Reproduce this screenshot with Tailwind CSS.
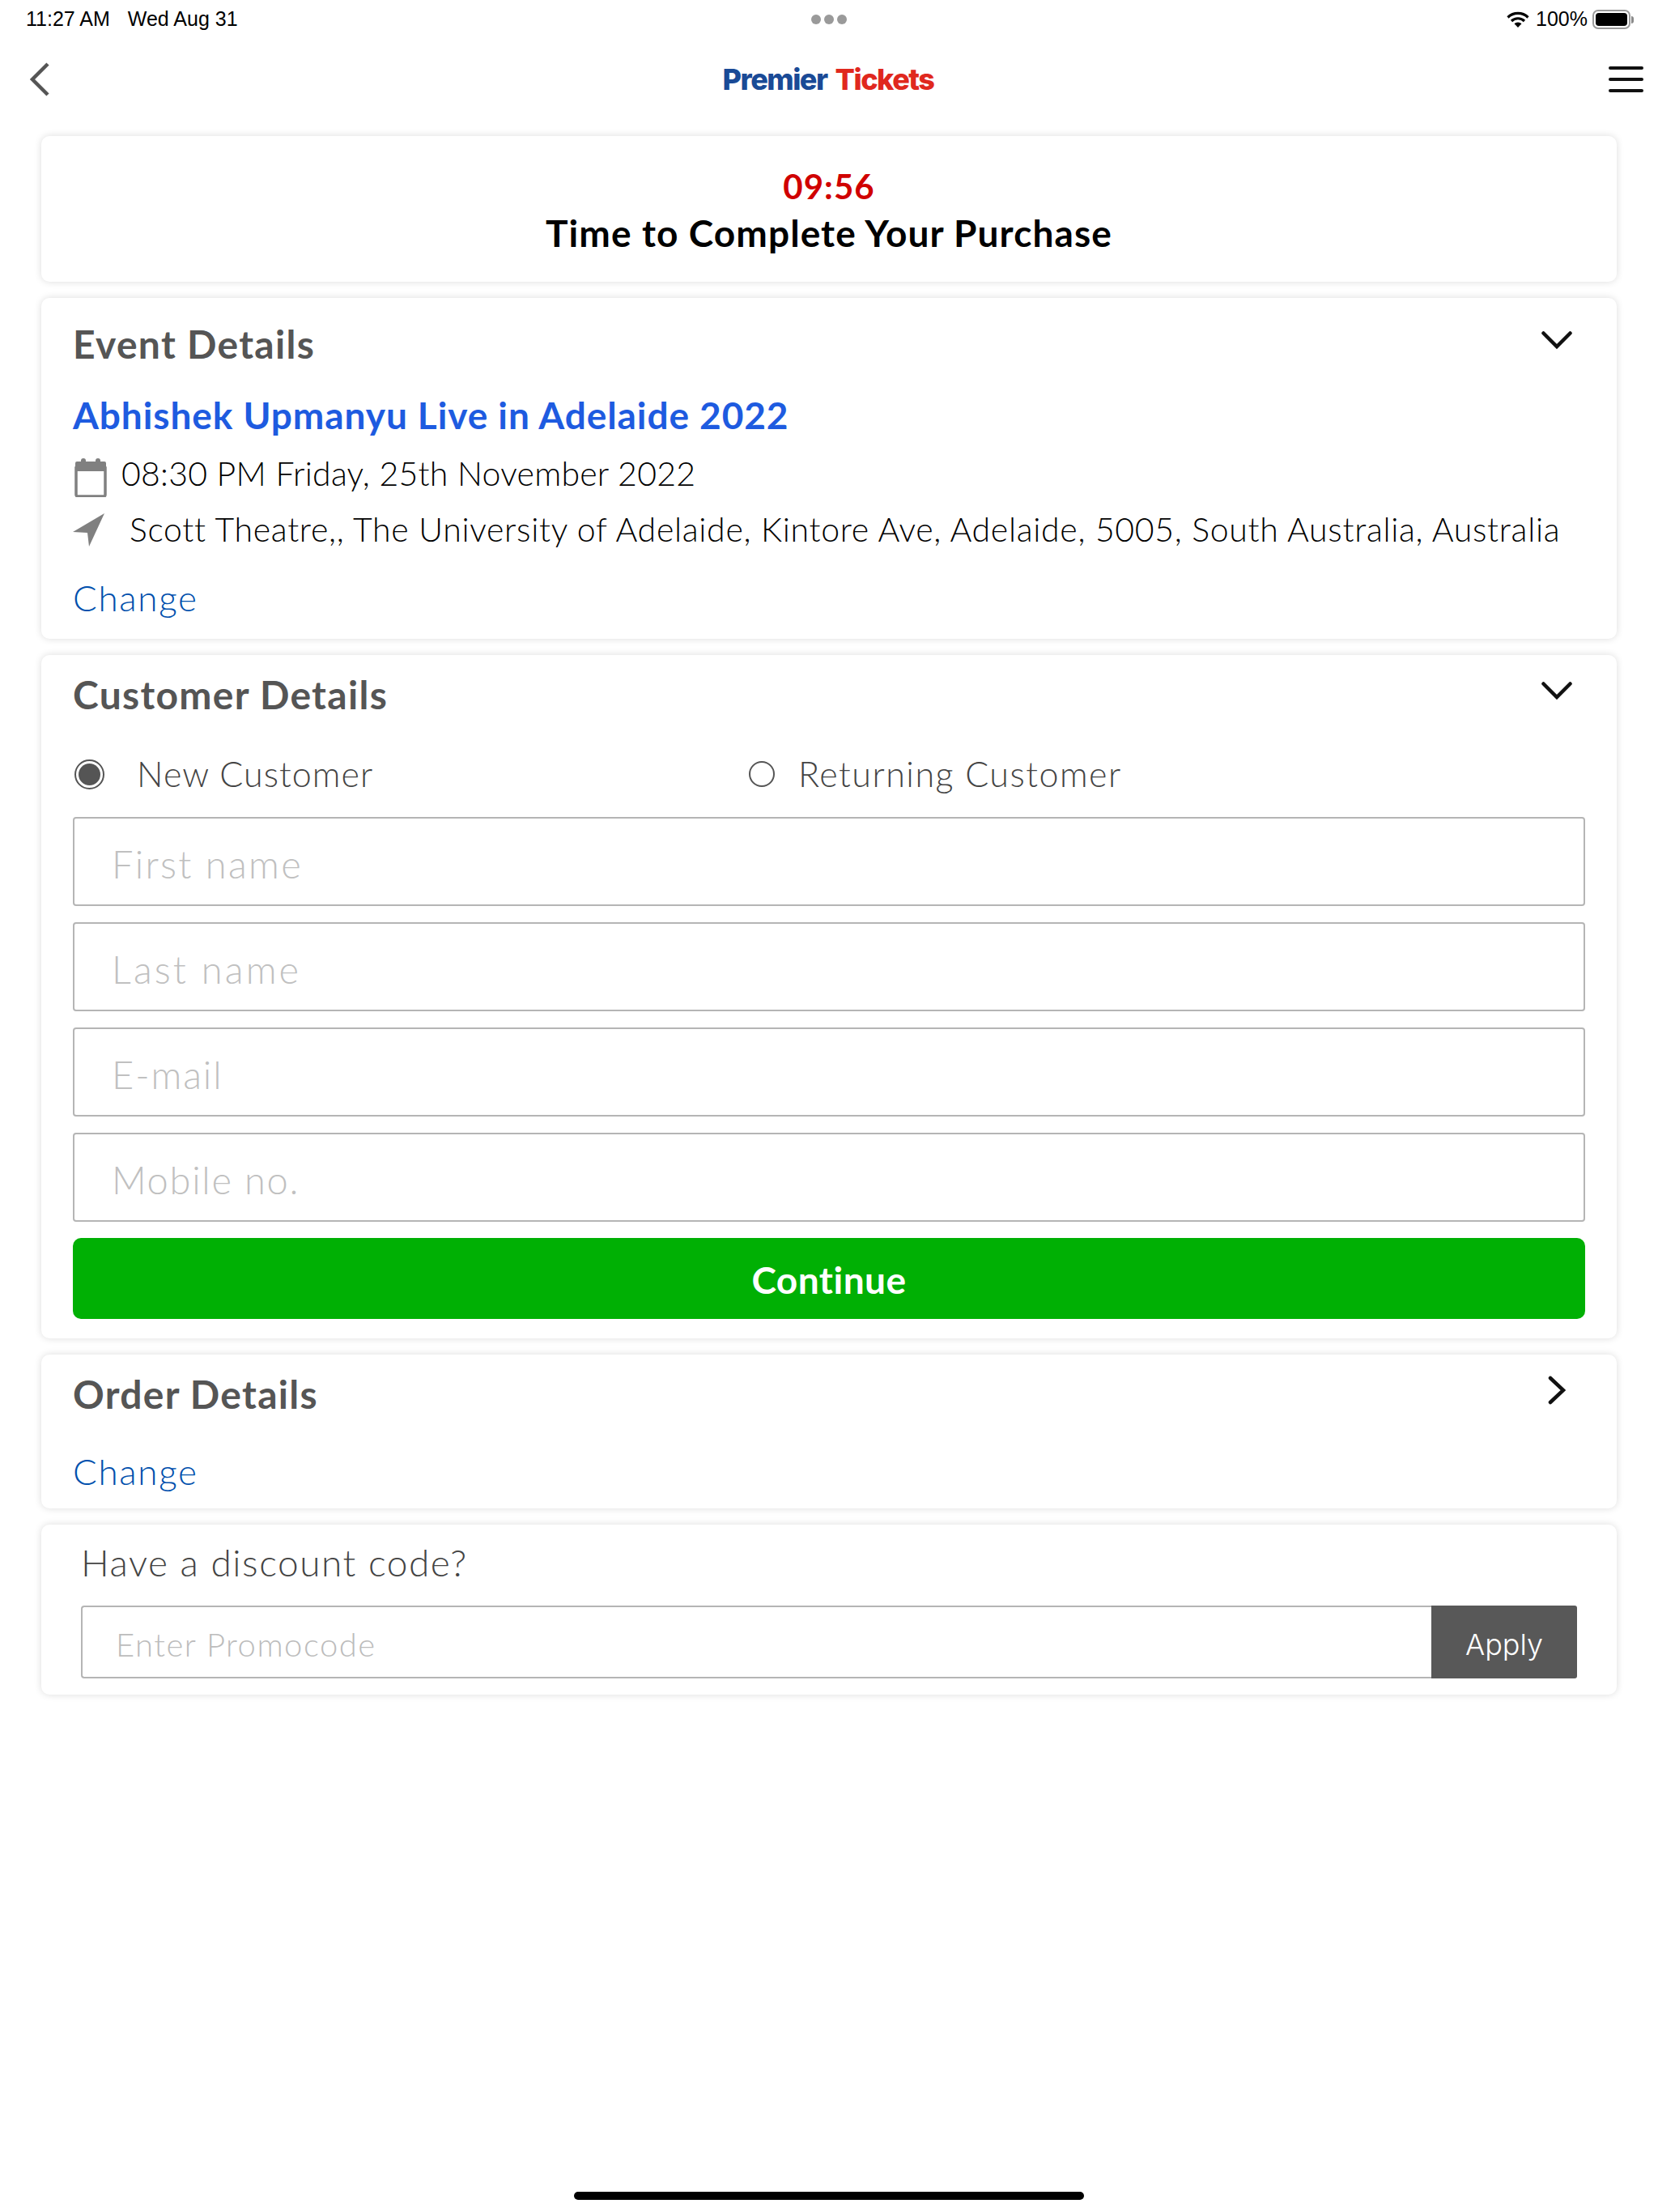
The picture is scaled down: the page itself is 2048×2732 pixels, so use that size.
<!DOCTYPE html>
<html><head><meta charset="utf-8"><script src="https://cdn.jsdelivr.net/npm/@tailwindcss/browser@4"></script></head>
<body class="bg-white font-['Lato',sans-serif] text-black">
<div class="relative w-[2048px] h-[2732px] overflow-hidden">
  <!-- status bar -->
  <div class="grid grid-cols-3 items-center h-[48px] pl-[32px] pr-[30px] font-['Liberation_Sans',sans-serif] text-[25px]">
    <div class="whitespace-nowrap"><span>11:27 AM</span><span class="ml-[22px]">Wed Aug 31</span></div>
    <div class="flex justify-center gap-[4px] pr-[2px]">
      <span class="w-[12px] h-[12px] rounded-full bg-[#9a9a9a]"></span><span class="w-[12px] h-[12px] rounded-full bg-[#9a9a9a]"></span><span class="w-[12px] h-[12px] rounded-full bg-[#9a9a9a]"></span>
    </div>
    <div class="flex items-center justify-end">
      <svg class="w-[28px] h-[20px] mr-[8px]" viewBox="0 0 28 20"><path d="M1.500 7.500 A18 18 0 0 1 26.500 7.500 M6 12 A11.500 11.500 0 0 1 22 12" fill="none" stroke="#000" stroke-width="3.200"/><path d="M14 20 L9.500 15.200 A6.500 6.500 0 0 1 18.500 15.200 Z" fill="#000"/></svg>
      <span>100%</span>
      <div class="ml-[6px] flex items-center"><div class="w-[47px] h-[24px] rounded-[7px] border-[2px] border-[#9a9a9a] p-[2px]"><div class="w-full h-full rounded-[4px] bg-black"></div></div><div class="ml-[1px] w-[3px] h-[9px] rounded-r bg-[#8a8a8a]"></div></div>
    </div>
  </div>
  <!-- nav -->
  <div class="grid grid-cols-3 items-center h-[100px] pl-[36px] pr-[18px]">
    <svg class="w-[26px] h-[42px]" viewBox="0 0 26 42"><path d="M23 2 L4 21 L23 40" fill="none" stroke="#555" stroke-width="4.500"/></svg>
    <div class="flex justify-center gap-[10px] font-['Inter',sans-serif] font-extrabold text-[36px] tracking-[-1.5px] pr-[20px] whitespace-nowrap"><span class="text-[#1a4a96]">Premier</span><span class="text-[#e0281e]">Tickets</span></div>
    <div class="w-[43px] flex flex-col gap-[10px] justify-self-end"><div class="h-[4px] bg-[#111] rounded"></div><div class="h-[4px] bg-[#111] rounded"></div><div class="h-[4px] bg-[#111] rounded"></div></div>
  </div>
  <!-- cards -->
  <main class="flex flex-col gap-[20px] pt-[20px] px-[51px]">
    <section class="h-[180px] rounded-[10px] bg-white shadow-[0_0_10px_rgba(0,0,0,0.14)] flex flex-col items-center pt-[37px]">
      <div class="h-[50px] flex items-center text-[#d00000] text-[42px] font-bold tracking-[1px]">09:56</div>
      <div class="h-[50px] mt-[7px] flex items-center text-[46px] font-bold tracking-[1.1px]">Time to Complete Your Purchase</div>
    </section>

    <section class="h-[421px] rounded-[10px] bg-white shadow-[0_0_10px_rgba(0,0,0,0.14)] px-[39px] pt-[27px]">
      <div class="h-[60px] flex items-center justify-between">
        <h2 class="text-[48px] font-bold text-[#555] tracking-[1.3px]">Event Details</h2>
        <svg class="w-[38px] h-[24px] mr-[16px] mb-[10px]" viewBox="0 0 38 24"><path d="M2.500 3.500 L19 20 L35.500 3.500" fill="none" stroke="#111" stroke-width="4.500" stroke-linecap="round"/></svg>
      </div>
      <div class="h-[50px] mt-[32px] flex items-center text-[46px] font-bold text-[#1e5be0] tracking-[0.92px]">Abhishek Upmanyu Live in Adelaide 2022</div>
      <div class="h-[50px] mt-[23px] flex items-center text-[41px] font-light tracking-[0.25px]">
        <svg class="w-[40px] h-[48px] mt-[10px] ml-[2px] mr-[18px] shrink-0" viewBox="0 0 40 48"><path d="M2 12 h36 v33 a2 2 0 0 1 -2 2 h-32 a2 2 0 0 1 -2 -2 Z" fill="none" stroke="#808080" stroke-width="3.500"/><path d="M1 6 a2 2 0 0 1 2 -2 h5 v-1 a3 3 0 0 1 6 0 v1 h12 v-1 a3 3 0 0 1 6 0 v1 h5 a2 2 0 0 1 2 2 v10 h-38 Z" fill="#808080"/></svg>
        08:30 PM Friday, 25th November 2022
      </div>
      <div class="h-[50px] mt-[19px] flex items-center text-[41px] font-light tracking-[0.7px] whitespace-nowrap">
        <svg class="w-[40px] h-[42px] mr-[30px] shrink-0" viewBox="0 0 40 42"><path d="M39 1 L0 24 L18 25 L20 42 Z" fill="#808080"/></svg>
        Scott Theatre,, The University of Adelaide, Kintore Ave, Adelaide, 5005, South Australia, Australia
      </div>
      <div class="h-[50px] mt-[34px] flex items-center text-[#0050ad] text-[44px] font-light tracking-[1.7px]">Change</div>
    </section>

    <section class="h-[844px] rounded-[10px] bg-white shadow-[0_0_10px_rgba(0,0,0,0.14)] px-[39px] pt-[19px]">
      <div class="h-[60px] flex items-center justify-between">
        <h2 class="text-[48px] font-bold text-[#555] tracking-[1.3px]">Customer Details</h2>
        <svg class="w-[38px] h-[24px] mr-[16px] mb-[10px]" viewBox="0 0 38 24"><path d="M2.500 3.500 L19 20 L35.500 3.500" fill="none" stroke="#111" stroke-width="4.500" stroke-linecap="round"/></svg>
      </div>
      <div class="h-[50px] mt-[43px] flex items-center text-[43px] font-light text-[#444] tracking-[1.1px]">
        <div class="w-[37px] h-[37px] ml-[2px] rounded-full border-[2px] border-[#555] p-[3px] shrink-0"><div class="w-full h-full rounded-full bg-[#555]"></div></div>
        <span class="ml-[40px] w-[756px]">New Customer</span>
        <div class="w-[32px] h-[32px] rounded-full border-[2px] border-[#555] shrink-0"></div>
        <span class="ml-[29px] tracking-[1.5px]">Returning Customer</span>
      </div>
      <div class="flex flex-col gap-[20px] mt-[28px]">
        <div class="h-[110px] rounded-[4px] border-[2px] border-[#b5b5b5] pl-[46px] flex items-center text-[47px] font-light text-[#c0c0c0] tracking-[2.3px] pt-[6px]">First name</div>
        <div class="h-[110px] rounded-[4px] border-[2px] border-[#b5b5b5] pl-[46px] flex items-center text-[47px] font-light text-[#c0c0c0] tracking-[3.1px] pt-[6px]">Last name</div>
        <div class="h-[110px] rounded-[4px] border-[2px] border-[#b5b5b5] pl-[46px] flex items-center text-[47px] font-light text-[#c0c0c0] tracking-[1.9px] pt-[6px]">E-mail</div>
        <div class="h-[110px] rounded-[4px] border-[2px] border-[#b5b5b5] pl-[46px] flex items-center text-[47px] font-light text-[#c0c0c0] tracking-[1.7px] pt-[6px]">Mobile no.</div>
        <div class="h-[100px] pt-[2px] rounded-[10px] bg-[#00b004] flex items-center justify-center text-white text-[46px] font-bold tracking-[0.5px]">Continue</div>
      </div>
    </section>

    <section class="h-[190px] rounded-[10px] bg-white shadow-[0_0_10px_rgba(0,0,0,0.14)] px-[39px] pt-[19px]">
      <div class="h-[60px] flex items-center justify-between">
        <h2 class="text-[48px] font-bold text-[#555] tracking-[1.3px]">Order Details</h2>
        <svg class="w-[22px] h-[36px] mr-[24px] mb-[10px]" viewBox="0 0 22 36"><path d="M3 3 L19 18 L3 33" fill="none" stroke="#111" stroke-width="4.500" stroke-linecap="round"/></svg>
      </div>
      <div class="h-[50px] mt-[40px] flex items-center text-[#0050ad] text-[44px] font-light tracking-[1.7px]">Change</div>
    </section>

    <section class="h-[210px] rounded-[10px] bg-white shadow-[0_0_10px_rgba(0,0,0,0.14)] pl-[49px] pr-[49px] pt-[21px]">
      <div class="h-[50px] flex items-center text-[46px] font-light text-[#444] tracking-[1.55px]">Have a discount code?</div>
      <div class="mt-[29px] h-[90px] flex">
        <div class="flex-1 border-[2px] border-r-0 border-[#b5b5b5] rounded-l-[4px] pl-[41px] pt-[6px] flex items-center text-[40px] font-light text-[#bcbcbc] tracking-[1.5px]">Enter Promocode</div>
        <div class="w-[180px] pt-[5px] bg-[#585858] rounded-r-[3px] flex items-center justify-center text-white font-['Inter',sans-serif] text-[36px] font-light">Apply</div>
      </div>
    </section>
  </main>
  <div class="absolute left-[709px] bottom-[15px] w-[630px] h-[10px] rounded-full bg-black"></div>
</div>
</body></html>
